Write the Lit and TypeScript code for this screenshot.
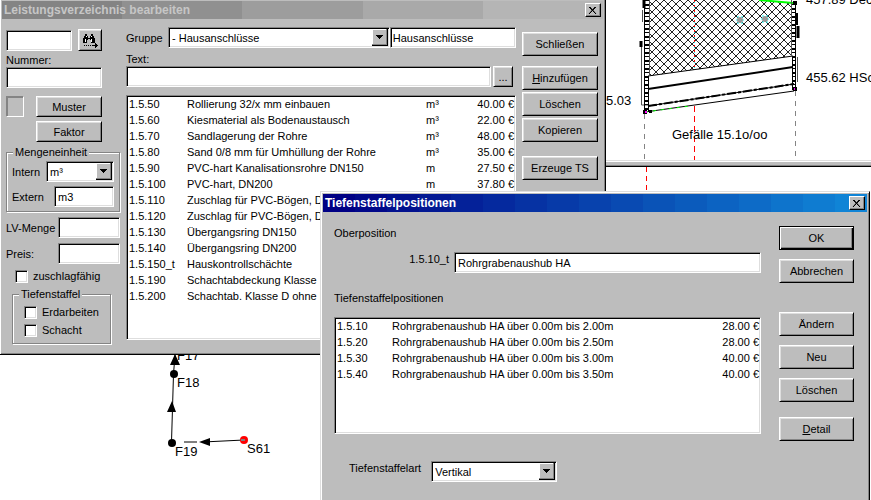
import { LitElement, html, svg, css, unsafeCSS } from "lit";
import { customElement, property } from "lit/decorators.js";

const bands = (from: number[], to: number[], count: number) =>
  unsafeCSS(
    "linear-gradient(90deg," +
      Array.from({ length: count }, (_, i) => {
        const t = i / (count - 1);
        const c = from.map((v, k) => Math.round(v + (to[k] - v) * t));
        const a = ((i / count) * 100).toFixed(2);
        const b = (((i + 1) / count) * 100).toFixed(2);
        return `rgb(${c.join(",")}) ${a}% ${b}%`;
      }).join(",") +
      ")"
  );

const controls = css`
  * { box-sizing: border-box; }
  button, input, select, table, fieldset, legend {
    font: inherit;
    color: inherit;
    margin: 0;
  }
  .btn {
    height: 24px;
    padding: 0;
    background: #bdbdbd;
    border: 1px solid;
    border-color: #fff #000 #000 #fff;
    border-radius: 0;
    box-shadow: inset 1px 1px #dedede, inset -1px -1px #848484;
    text-align: center;
    line-height: 16px;
    width: 100%;
  }
  .btn.small { height: 21px; }
  .field, .list {
    background: #fff;
    border: 1px solid;
    border-color: #848484 #fff #fff #848484;
    border-radius: 0;
    box-shadow: inset 1px 1px #000, inset -1px -1px #dedede;
  }
  .field {
    display: block;
    width: 100%;
    min-width: 0;
    height: 21px;
    padding: 0 3px;
    outline: 0;
  }
  .combo {
    position: relative;
    display: block;
  }
  .combo select {
    appearance: none;
    padding-right: 20px;
  }
  .combo svg {
    position: absolute;
    right: 2px;
    top: 2px;
    width: 16px;
    height: 17px;
    pointer-events: none;
  }
  .list {
    overflow: hidden;
    padding: 0 1px 1px 2px;
  }
  table {
    width: 100%;
    border-collapse: collapse;
    table-layout: fixed;
  }
  td {
    padding: 0;
    height: 16px;
    line-height: 16px;
    white-space: nowrap;
  }
  .num { text-align: right; }
`;

const dropArrow = html`<svg viewBox="0 0 16 17" aria-hidden="true">
  <path d="M0 0h16v17h-16z" fill="#000" />
  <path d="M0 0h15v16h-15z" fill="#848484" />
  <path d="M0 0h14v15h-14z" fill="#fff" />
  <path d="M1 1h13v14h-13z" fill="#bdbdbd" />
  <path d="M4 6h7v1h-1v1h-1v1h-1v1h-1v-1h-1v-1h-1v-1h-1z" fill="#000" />
</svg>`;

@customElement("dialog-window")
class DialogWindow extends LitElement {
  @property() caption = "";
  @property({ type: Boolean, reflect: true }) active = false;

  static styles = css`
    :host {
      display: block;
      box-sizing: border-box;
      background: #bdbdbd;
      border: 1px solid;
      border-color: #dedede #000 #000 #dedede;
      box-shadow: inset 1px 1px #fff, inset -1px -1px #848484;
      padding: 2px;
    }
    .bar {
      display: flex;
      align-items: center;
      height: 18px;
      padding: 0 2px;
      color: #c6c6c6;
      background: ${bands([132, 132, 132], [181, 181, 181], 5)};
      font-weight: bold;
      font-size: 12px;
    }
    :host([active]) .bar {
      color: #fff;
      background: ${bands([0, 0, 132], [16, 132, 214], 17)};
    }
    .caption { flex: 1; }
    .close {
      width: 16px;
      height: 14px;
      padding: 0;
      background: #bdbdbd;
      border: 1px solid;
      border-color: #fff #000 #000 #fff;
      box-shadow: inset -1px -1px #848484;
      display: grid;
      place-items: center;
    }
  `;

  render() {
    return html`
      <div class="bar">
        <span class="caption">${this.caption}</span>
        <button class="close" aria-label="Schließen">
          <svg width="10" height="9" viewBox="0 0 10 9" aria-hidden="true">
            <path d="M1 1l7 7M2 1l6 7M8 1l-7 7M7 1l-6 7" stroke="#000" fill="none" />
          </svg>
        </button>
      </div>
      <slot></slot>
    `;
  }
}

const positions = [
  ["1.5.50", "Rollierung 32/x mm einbauen", "m³", "40.00 €"],
  ["1.5.60", "Kiesmaterial als Bodenaustausch", "m³", "22.00 €"],
  ["1.5.70", "Sandlagerung der Rohre", "m³", "48.00 €"],
  ["1.5.80", "Sand 0/8 mm für Umhüllung der Rohre", "m³", "35.00 €"],
  ["1.5.90", "PVC-hart Kanalisationsrohre DN150", "m", "27.50 €"],
  ["1.5.100", "PVC-hart, DN200", "m", "37.80 €"],
  ["1.5.110", "Zuschlag für PVC-Bögen, D"],
  ["1.5.120", "Zuschlag für PVC-Bögen, D"],
  ["1.5.130", "Übergangsring DN150"],
  ["1.5.140", "Übergangsring DN200"],
  ["1.5.150_t", "Hauskontrollschächte"],
  ["1.5.190", "Schachtabdeckung Klasse"],
  ["1.5.200", "Schachtab. Klasse D ohne l"],
];

@customElement("catalog-form")
class CatalogForm extends LitElement {
  static styles = [
    controls,
    css`
      :host {
        display: grid;
        grid-template-columns: 114px minmax(0, 1fr) 76px;
        column-gap: 6px;
        padding: 8px 5px 8px 4px;
        font-size: 11px;
        line-height: 14px;
      }
      .left { display: flex; flex-direction: column; padding-top: 2px; }
      .row { display: flex; align-items: center; }
      .find { width: 24px; height: 22px; display: grid; place-items: center; }
      .search { width: 66px; }
      .number { width: 96px; }
      .between { justify-content: space-between; width: 96px; }
      .lbl { height: 14px; }
      .nr { margin: 2px 0 0; }
      .swatch {
        width: 18px;
        height: 21px;
        border: 1px solid;
        border-color: #848484 #fff #fff #848484;
        box-shadow: inset 1px 1px #848484;
      }
      .pair { display: grid; grid-template-columns: 18px 66px; column-gap: 12px; row-gap: 4px; margin-top: 8px; }
      .pair .faktor { grid-column: 2; }
      .group {
        border: 0;
        padding: 0;
        min-width: 0;
        display: grid;
      }
      .frame {
        border: 1px solid #848484;
        box-shadow: 1px 1px #fff, inset 1px 1px #fff;
        margin-top: -7px;
        padding: 8px 5px 4px;
      }
      .group legend {
        position: relative;
        margin-left: 7px;
        padding: 0 2px;
        background: #bdbdbd;
        z-index: 1;
      }
      .units { margin-top: 3px; }
      .units .row { justify-content: space-between; }
      .units .row + .row { margin-top: 4px; }
      .units .combo { width: 68px; }
      .units .ext { width: 60px; }
      .amount { justify-content: space-between; margin-top: 5px; }
      .amount .field { width: 62px; }
      .check { gap: 5px; height: 18px; }
      .tick { margin: 3px 0 2px 9px; }
      .check input {
        appearance: none;
        width: 13px;
        height: 13px;
        background: #fff;
        border: 1px solid;
        border-color: #848484 #fff #fff #848484;
        box-shadow: inset 1px 1px #000, inset -1px -1px #dedede;
      }
      .depth { width: 96px; margin-left: 6px; }
      .depth .frame { padding: 8px 11px 4px; }
      .mid { display: flex; flex-direction: column; }
      .top { height: 21px; }
      .top label { width: 42px; }
      .top .combo { flex: 225; min-width: 0; }
      .top .group-name { flex: 122; width: 0; padding: 0 2px; }
      .text { margin-top: 4px; }
      .query { gap: 2px; }
      .more { width: 20px; flex: none; margin-right: 3px; }
      .list { margin: 8px 0 4px; flex: 1; }
      .c1 { width: 58px; }
      .c3 { width: 32px; }
      .c4 { width: 56px; }
      .right { display: flex; flex-direction: column; gap: 2px; padding-top: 5px; }
      .gap-s { margin-top: 8px; }
      .gap-l { margin-top: 12px; }
    `,
  ];

  render() {
    return html`
      <div class="left">
        <div class="row between">
          <input class="field search" aria-label="Suche" />
          <button class="btn find" aria-label="Suchen">
            <svg width="16" height="15" viewBox="0 0 16 15" aria-hidden="true">
              <path d="M3 1h2v2h1v2h2v-2h1v-2h2v2h1v2h1v5h-4v-3h-1v-1h-2v1h-1v3h-4v-5h1v-2h1z" fill="#000" />
              <path d="M3 6h1v3h-1zM9 6h1v3h-1zM4 3h1v1h-1zM9 3h1v1h-1z" fill="#fff" />
              <path d="M2 12h1v1h-1zM4 12h1v1h-1zM6 12h1v1h-1zM8 12h1v1h-1zM10 12h3v-2h1v1h1v1h1v1h-1v1h-1v1h-1v-2h-3z" fill="#000" />
            </svg>
          </button>
        </div>
        <label class="lbl nr" for="nr">Nummer:</label>
        <input id="nr" class="field number" />
        <div class="pair">
          <span class="swatch"></span>
          <button class="btn small">Muster</button>
          <button class="btn small faktor">Faktor</button>
        </div>
        <fieldset class="group units">
          <legend>Mengeneinheit</legend>
          <div class="frame">
            <div class="row">
              <label for="intern">Intern</label>
              <span class="combo">
                <select id="intern" class="field"><option>m³</option></select>${dropArrow}
              </span>
            </div>
            <div class="row">
              <label for="extern">Extern</label>
              <input id="extern" class="field ext" value="m3" />
            </div>
          </div>
        </fieldset>
        <div class="row amount">
          <label for="menge">LV-Menge</label>
          <input id="menge" class="field" />
        </div>
        <div class="row amount">
          <label for="preis">Preis:</label>
          <input id="preis" class="field" />
        </div>
        <label class="row check tick"><input type="checkbox" />zuschlagfähig</label>
        <fieldset class="group depth">
          <legend>Tiefenstaffel</legend>
          <div class="frame">
            <label class="row check"><input type="checkbox" />Erdarbeiten</label>
            <label class="row check"><input type="checkbox" />Schacht</label>
          </div>
        </fieldset>
      </div>

      <div class="mid">
        <div class="row top">
          <label for="gruppe">Gruppe</label>
          <span class="combo">
            <select id="gruppe" class="field"><option>- Hausanschlüsse</option></select>${dropArrow}
          </span>
          <input class="field group-name" aria-label="Gruppenname" value="Hausanschlüsse" />
        </div>
        <label class="lbl text" for="text">Text:</label>
        <div class="row query">
          <input id="text" class="field" />
          <button class="btn small more">...</button>
        </div>
        <div class="list">
          <table>
            <colgroup><col class="c1" /><col /><col class="c3" /><col class="c4" /></colgroup>
            ${positions.map(
              ([nr, text, unit, price]) => html`<tr>
                <td>${nr}</td><td>${text}</td><td>${unit}</td><td class="num">${price}</td>
              </tr>`
            )}
          </table>
        </div>
      </div>

      <div class="right">
        <button class="btn">Schließen</button>
        <button class="btn gap-s"><u>H</u>inzufügen</button>
        <button class="btn">Löschen</button>
        <button class="btn">Kopieren</button>
        <button class="btn gap-l">Erzeuge TS</button>
      </div>
    `;
  }
}

const steps = [
  ["1.5.10", "Rohrgrabenaushub HA über 0.00m bis 2.00m", "28.00 €"],
  ["1.5.20", "Rohrgrabenaushub HA über 0.00m bis 2.50m", "28.00 €"],
  ["1.5.30", "Rohrgrabenaushub HA über 0.00m bis 3.00m", "40.00 €"],
  ["1.5.40", "Rohrgrabenaushub HA über 0.00m bis 3.50m", "40.00 €"],
];

@customElement("depth-form")
class DepthForm extends LitElement {
  static styles = [
    controls,
    css`
      :host {
        display: grid;
        grid-template-columns: minmax(0, 1fr) 75px;
        column-gap: 18px;
        padding: 14px 13px 36px 11px;
        font-size: 11px;
        line-height: 14px;
      }
      .main { display: flex; flex-direction: column; }
      .upper { display: flex; gap: 5px; margin: 12px 0 18px; }
      .upper label { width: 115px; text-align: right; }
      .upper .field { flex: 1; width: 0; }
      .list { height: 117px; margin-top: 12px; }
      .c1 { width: 55px; }
      .c3 { width: 56px; }
      .kind { display: flex; gap: 10px; margin: 27px 0 0 15px; }
      .kind .combo { width: 126px; }
      .right { display: flex; flex-direction: column; gap: 9px; }
      .gap { margin-top: 20px; }
      .gap-s { margin-top: 6px; }
      .default { outline: 1px solid #000; outline-offset: -1px; box-shadow: inset 1px 1px #fff, inset -1px -1px #000, inset -2px -2px #848484; }
    `,
  ];

  render() {
    return html`
      <div class="main">
        <span>Oberposition</span>
        <div class="upper">
          <label for="ober">1.5.10_t</label>
          <input id="ober" class="field" value="Rohrgrabenaushub HA" />
        </div>
        <span>Tiefenstaffelpositionen</span>
        <div class="list">
          <table>
            <colgroup><col class="c1" /><col /><col class="c3" /></colgroup>
            ${steps.map(
              ([nr, text, price]) => html`<tr>
                <td>${nr}</td><td>${text}</td><td class="num">${price}</td>
              </tr>`
            )}
          </table>
        </div>
        <div class="kind">
          <label for="art">Tiefenstaffelart</label>
          <span class="combo">
            <select id="art" class="field"><option>Vertikal</option></select>${dropArrow}
          </span>
        </div>
      </div>
      <div class="right">
        <button class="btn default">OK</button>
        <button class="btn">Abbrechen</button>
        <button class="btn gap">Ändern</button>
        <button class="btn">Neu</button>
        <button class="btn">Löschen</button>
        <button class="btn gap-s"><u>D</u>etail</button>
      </div>
    `;
  }
}

// Longitudinal section of the sewer run: trench, pipe and bedding between two manholes.
const profile = svg`
  <defs>
    <pattern id="hatch" width="8" height="8" patternUnits="userSpaceOnUse">
      <path d="M0 0l8 8M8 0l-8 8" stroke="#222" fill="none" />
    </pattern>
  </defs>
  <path d="M650 0H767L792 3V56L650 76z" fill="url(#hatch)" />
  <path d="M648 76L793 56M645 112L794 91" stroke="#000" fill="none" />
  <path d="M648 89L793 67" stroke="#000" stroke-width="2" />
  <path d="M648 106L794 84" stroke="#000" stroke-width="2" stroke-dasharray="9 2 3 2" />
  <path d="M648 106L794 84" stroke="#000" />
  <path d="M759 0L793 3" stroke="#0f0" stroke-width="2" />
  <path d="M645 112L690 106" stroke="#0f0" stroke-dasharray="3 5" />
  <path d="M649.500 0V76M791.500 0V56M641.500 42V105H648M642.500 10V22M797.500 57V82" stroke="#555" fill="none" />
  <path d="M644.500 0V112M648.500 76V112M792.500 56V90M795.500 4V90" stroke="#000" fill="none" />
  <path d="M647 0V112M794 4V90" stroke="#000" stroke-width="4" stroke-dasharray="1 3 2 2" />
  <path d="M644 0V8M796.500 13V25M798 26V38M641 41V47" stroke="#000" stroke-width="3" />
  <path d="M643 110h4v4h-4zM649 110h3v3h-3zM793 1h4v4h-4zM793 87h4v4h-4z" fill="#000" />
  <path d="M645 111h2v2h-2zM794 88h1v2h-1z" fill="#f0f" />
  <path d="M694.500 0V70" stroke="#f00" stroke-dasharray="2 3" />
  <path d="M694.500 2V70" stroke="#0ff" stroke-dasharray="1 4" />
  <path d="M694.500 106V160" stroke="#f00" stroke-dasharray="6 4" />
  <path d="M644.500 114V160M795.500 91V160" stroke="#848484" stroke-dasharray="5 5" />
  <path d="M737 17h6v6h-6zM762 16h6v6h-6z" fill="none" stroke="#0ff" stroke-dasharray="2 2" />
  <circle cx="740" cy="20" r="3" fill="#999" /><circle cx="765" cy="19" r="3" fill="#999" />
  <text x="806" y="4">457.89 Dec</text>
  <text x="806" y="82">455.62 HSc</text>
  <text x="606" y="105">5.03</text>
  <text x="672" y="139">Gefälle 15.1o/oo</text>
`;

// Network plan with its nodes and flow arrows.
const plan = svg`
  <path d="M646.500 0V24" stroke="#f00" stroke-dasharray="5 4" />
  <path d="M175 188L173.500 207L171.500 275M184 275H197M203 275L244 273" stroke="#000" fill="none" />
  <path d="M175 187l5 11h-10zM172 234l4 11h-9zM199 275l11 -4v8z" fill="#000" />
  <circle cx="174" cy="207" r="4" /><circle cx="172" cy="276" r="4" />
  <circle cx="244" cy="273" r="4" fill="#f00" />
  <path d="M241 273h4" stroke="#0ff" />
  <text x="177" y="193">F17</text>
  <text x="177" y="220">F18</text>
  <text x="175" y="289">F19</text>
  <text x="247" y="286">S61</text>
`;

@customElement("app-root")
class AppRoot extends LitElement {
  static styles = css`
    :host {
      position: relative;
      display: flex;
      flex-direction: column;
      height: 100vh;
      overflow: hidden;
      background: #fff;
      color: #000;
      font-family: "Liberation Sans", Arial, sans-serif;
      font-size: 13px;
    }
    .profile { width: 100%; height: 160px; flex: none; }
    .plan { width: 100%; flex: 1; min-height: 0; }
    .splitter {
      height: 7px;
      flex: none;
      box-sizing: border-box;
      background: #bdbdbd;
      border-top: 1px solid #dedede;
      border-bottom: 1px solid #000;
      box-shadow: inset 0 1px #fff, inset 0 -1px #848484;
    }
    .catalog {
      position: absolute;
      left: -1px;
      top: -2px;
      width: 607px;
    }
    .depth {
      position: absolute;
      left: 320px;
      right: 1px;
      top: 191px;
    }
  `;

  render() {
    return html`
      <svg class="profile">${profile}</svg>
      <div class="splitter"></div>
      <svg class="plan">${plan}</svg>
      <dialog-window class="catalog" caption="Leistungsverzeichnis bearbeiten">
        <catalog-form></catalog-form>
      </dialog-window>
      <dialog-window class="depth" caption="Tiefenstaffelpositionen" active>
        <depth-form></depth-form>
      </dialog-window>
    `;
  }
}
